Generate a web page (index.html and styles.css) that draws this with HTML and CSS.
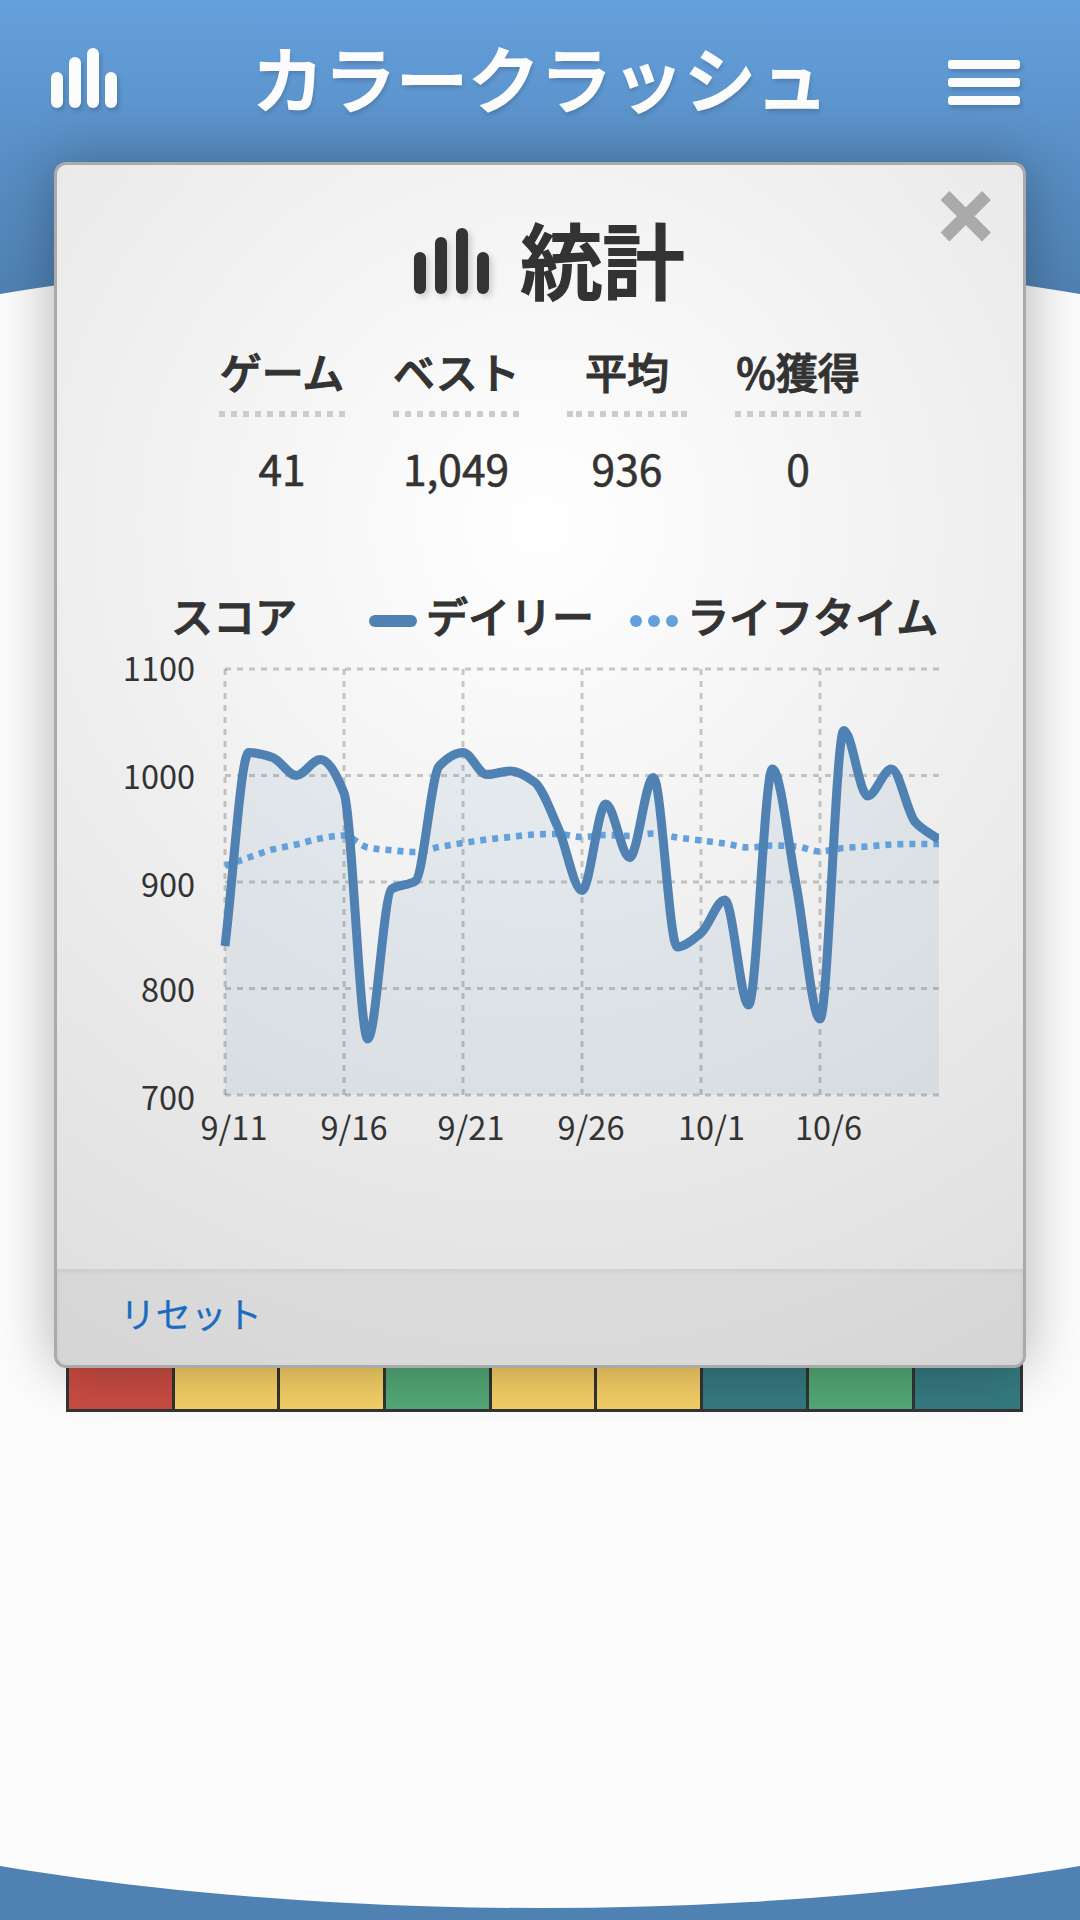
FILE: index.html
```html
<!DOCTYPE html>
<html lang="ja">
<head>
<meta charset="utf-8">
<title>カラークラッシュ</title>
<link rel="stylesheet" href="styles.css">
</head>
<body>
<header class="topbar">
  <svg class="icon icon-stats" viewBox="0 0 72 60" aria-hidden="true">
    <rect x="0" y="24" width="12" height="36" rx="6"/>
    <rect x="18" y="9" width="12" height="51" rx="6"/>
    <rect x="36" y="0" width="12" height="60" rx="6"/>
    <rect x="54" y="24" width="12" height="36" rx="6"/>
  </svg>
  <h1 class="game-title">カラークラッシュ</h1>
  <svg class="icon" viewBox="0 0 72 60" aria-hidden="true">
    <rect y="12" width="72" height="9" rx="3"/>
    <rect y="30" width="72" height="9" rx="3"/>
    <rect y="48" width="72" height="9" rx="3"/>
  </svg>
</header>

<main class="stage">
  <div class="board">
    <i class="cell red"></i><i class="cell yellow"></i><i class="cell yellow"></i>
    <i class="cell green"></i><i class="cell yellow"></i><i class="cell yellow"></i>
    <i class="cell teal"></i><i class="cell green"></i><i class="cell teal"></i>
  </div>
</main>

<section class="dialog" role="dialog">
  <svg class="close" viewBox="0 0 52 52" aria-label="閉じる">
    <path d="M5 5.5 46.5 47M46.5 5.5 5 47"/>
  </svg>
  <div class="dialog-body">
    <h2 class="dialog-title">
      <svg class="title-icon" viewBox="0 0 75 66" aria-hidden="true">
        <rect x="0" y="24" width="12" height="42" rx="6"/>
        <rect x="21" y="9" width="12" height="57" rx="6"/>
        <rect x="42" y="0" width="12" height="66" rx="6"/>
        <rect x="63" y="24" width="12" height="42" rx="6"/>
      </svg>
      <span>統計</span>
    </h2>
    <dl class="totals">
      <div class="total"><dt>ゲーム</dt><dd>41</dd></div>
      <div class="total"><dt>ベスト</dt><dd>1,049</dd></div>
      <div class="total narrow"><dt>平均</dt><dd>936</dd></div>
      <div class="total"><dt>%獲得</dt><dd>0</dd></div>
    </dl>
    <div class="legend">
      <span class="legend-title">スコア</span>
      <svg class="swatch daily" viewBox="0 0 48 12"><rect width="48" height="12" rx="6"/></svg>
      <span class="legend-daily">デイリー</span>
      <svg class="swatch lifetime" viewBox="0 0 48 12"><circle cx="6" cy="6" r="6"/><circle cx="24" cy="6" r="6"/><circle cx="42" cy="6" r="6"/></svg>
      <span>ライフタイム</span>
    </div>
    <svg class="chart" viewBox="90 640 849 518">
      <g class="grid">
        <path d="M225 669H939M225 775.5H939M225 882H939M225 988.5H939M225 1095H939"/>
        <path d="M225 669V1095M344 669V1095M463 669V1095M582 669V1095M701 669V1095M820 669V1095"/>
      </g>
      <path id="area"/>
      <path id="lifetime"/>
      <path id="daily"/>
      <g class="y-labels">
        <text x="195" y="681">1100</text>
        <text x="195" y="789">1000</text>
        <text x="195" y="897">900</text>
        <text x="195" y="1002">800</text>
        <text x="195" y="1110">700</text>
      </g>
      <g class="x-labels">
        <text x="234" y="1140">9/11</text>
        <text x="354" y="1140">9/16</text>
        <text x="471" y="1140">9/21</text>
        <text x="591" y="1140">9/26</text>
        <text x="711.5" y="1140">10/1</text>
        <text x="828.5" y="1140">10/6</text>
      </g>
    </svg>
  </div>
  <footer class="dialog-footer"><a class="reset">リセット</a></footer>
</section>
<script src="chart.js"></script>
</body>
</html>
```
FILE: styles.css
```css
* { box-sizing: border-box; }

body {
  margin: 0;
  height: 1920px;
  overflow: hidden;
  position: relative;
  background: #5081b3 linear-gradient(#64a0dc, #5081b3) 0 0 / 100% 294px no-repeat;
  color: #333;
  font-family: "Noto Sans CJK JP", sans-serif;
}

/* Top bar */
.topbar {
  height: 156px;
  padding: 0 60px;
  display: grid;
  grid-template-columns: 72px 1fr 72px;
  align-items: center;
}
.icon {
  width: 72px;
  height: 60px;
  overflow: visible;
  fill: #fcfcfc;
  filter: drop-shadow(2px 3px 2px rgba(0, 0, 0, .17));
}
.icon-stats { margin-left: -9px; }
.game-title,
.dialog-title,
.total dt,
.legend {
  font-weight: 500;
  -webkit-text-stroke: .026em currentColor;
}
.total dd,
.chart text {
  -webkit-text-stroke: .014em currentColor;
}
.game-title {
  margin: 0;
  padding-bottom: 4px;
  text-align: center;
  white-space: nowrap;
  font-size: 72px;
  line-height: 104px;
  color: #fcfcfc;
  text-shadow: 1px 3px 5px rgba(0, 0, 0, .2);
}

/* Playing area, with curved top and bottom edges */
.stage {
  margin-top: 96px;
  height: 1656px;
  padding: 1054px 66px 0;
  clip-path: inset(0 -540px round 1080px / 313px);
  background: #fcfcfc;
}
.board {
  width: 957px;
  height: 106px;
  display: grid;
  grid-template-columns: repeat(8, 105.7px) 1fr;
  border: solid #333;
  border-width: 3px 3px 3px 0;
}
.cell { border-left: 3px solid #333; }
.red { background: #c94c43; }
.yellow { background: #f5cf67; }
.green { background: #53a876; }
.teal { background: #357a81; }

/* Statistics dialog */
.dialog {
  position: absolute;
  left: 54px;
  top: 162px;
  width: 972px;
  height: 1206px;
  display: flex;
  flex-direction: column;
  border: 3px solid #aaa;
  border-radius: 12px;
  background: radial-gradient(circle farthest-corner at 50% 30%, #fff, #ddd);
  box-shadow: 0 0 57px rgba(0, 0, 0, .3);
  overflow: hidden;
}
.close {
  position: absolute;
  right: 31px;
  top: 25px;
  width: 52px;
  height: 52px;
  fill: none;
  stroke: #aaa;
  stroke-width: 12.5;
}
.dialog-body {
  flex: 1;
  display: flex;
  flex-direction: column;
  align-items: center;
}
.dialog-title {
  margin: 33px 0 0 19px;
  height: 120px;
  display: flex;
  align-items: center;
  gap: 31px;
  font-size: 82px;
  line-height: 120px;
}
.title-icon {
  width: 75px;
  height: 66px;
  margin-top: 6px;
  overflow: visible;
  fill: #333;
  filter: drop-shadow(3px 3px 3px rgba(0, 0, 0, .17));
}
.totals {
  margin: 24px 0 0;
  display: flex;
  gap: 48px;
}
.total { width: 126px; text-align: center; white-space: nowrap; }
.total.narrow { width: 120px; }
.total dt {
  height: 75px;
  font-size: 42px;
  line-height: 58px;
  background: repeating-linear-gradient(90deg, #ccc 0 6px, transparent 6px 12px) 0 100% / 100% 6px no-repeat;
}
.total.narrow dt {
  background:
    linear-gradient(#ccc, #ccc) 0 100% / 6px 6px no-repeat,
    linear-gradient(#ccc, #ccc) 100% 100% / 6px 6px no-repeat,
    repeating-linear-gradient(90deg, #ccc 0 6px, transparent 6px 12px) 9px 100% / 102px 6px no-repeat;
}
.total dd {
  margin: 21px 0 0;
  font-size: 42.5px;
  line-height: 60px;
}
.legend {
  width: 774px;
  height: 60px;
  margin: 87px 0 0 36px;
  display: flex;
  align-items: center;
  font-size: 42px;
  line-height: 60px;
  white-space: nowrap;
}
.swatch { width: 48px; height: 12px; margin: 12px 9px 0 0; }
.daily { fill: #5081b3; }
.lifetime { fill: #64a0dc; }
.legend-title { width: 198px; }
.legend-daily { width: 204px; }
.chart {
  width: 849px;
  height: 518px;
  margin: -5px 51px 0 0;
  font-size: 32.5px;
}
.grid path {
  fill: none;
  stroke: rgba(0, 0, 0, .2);
  stroke-width: 3;
  stroke-dasharray: 6;
}
#area { fill: rgba(80, 129, 179, .1); }
#lifetime {
  fill: none;
  stroke: #64a0dc;
  stroke-width: 6.6;
  stroke-dasharray: 6;
}
#daily { fill: none; stroke: #5081b3; stroke-width: 9; }
.chart text { fill: #333; }
.y-labels { text-anchor: end; }
.x-labels { text-anchor: middle; }
.dialog-footer {
  height: 96px;
  flex: none;
  padding: 16px 63px;
  background: rgba(0, 0, 0, .035);
  box-shadow: inset 0 3px 6px -1px rgba(0, 0, 0, .07);
}
.reset {
  display: block;
  font-size: 35.5px;
  line-height: 55px;
  color: #1a6cc0;
  -webkit-text-stroke: .008em currentColor;
}
```
FILE: chart.js
```js
// Heights of the daily and lifetime series in chart units, one per day.
const daily = [946, 752.5, 757.5, 775.5, 759.5, 793, 1039, 889, 881, 766, 752.5,
  774.5, 771, 782, 828, 890.5, 804, 857.5, 777.5, 947, 933, 900, 1005, 769, 885,
  1019, 730.5, 796, 769, 822, 839.5];
const lifetime = [866, 857.5, 849.5, 844.5, 838.5, 835.5, 847.5, 850.3, 852, 847,
  843, 839.5, 837, 834.5, 834, 837, 835, 836, 833.5, 837.5, 840.5, 843.5, 847.5,
  845.5, 846.5, 851.5, 848, 846.5, 844.5, 844, 844];
const left = 225, step = 23.8;

// Monotone cubic interpolation through evenly spaced points.
function curve(ys) {
  const n = ys.length;
  const d = ys.slice(1).map((y, i) => y - ys[i]);
  const m = ys.map((_, i) => {
    if (i === 0) return d[0];
    if (i === n - 1) return d[n - 2];
    return d[i - 1] * d[i] <= 0 ? 0 : 2 * d[i - 1] * d[i] / (d[i - 1] + d[i]);
  });
  let path = `M${left} ${ys[0]}`;
  for (let i = 1; i < n; i++) {
    const x = left + i * step;
    path += `C${x - step * 2 / 3} ${ys[i - 1] + m[i - 1] / 3} ${x - step / 3} ${ys[i] - m[i] / 3} ${x} ${ys[i]}`;
  }
  return path;
}

document.getElementById('daily').setAttribute('d', curve(daily));
document.getElementById('lifetime').setAttribute('d', curve(lifetime));
document.getElementById('area').setAttribute('d', curve(daily) + 'V1095H225Z');
```
